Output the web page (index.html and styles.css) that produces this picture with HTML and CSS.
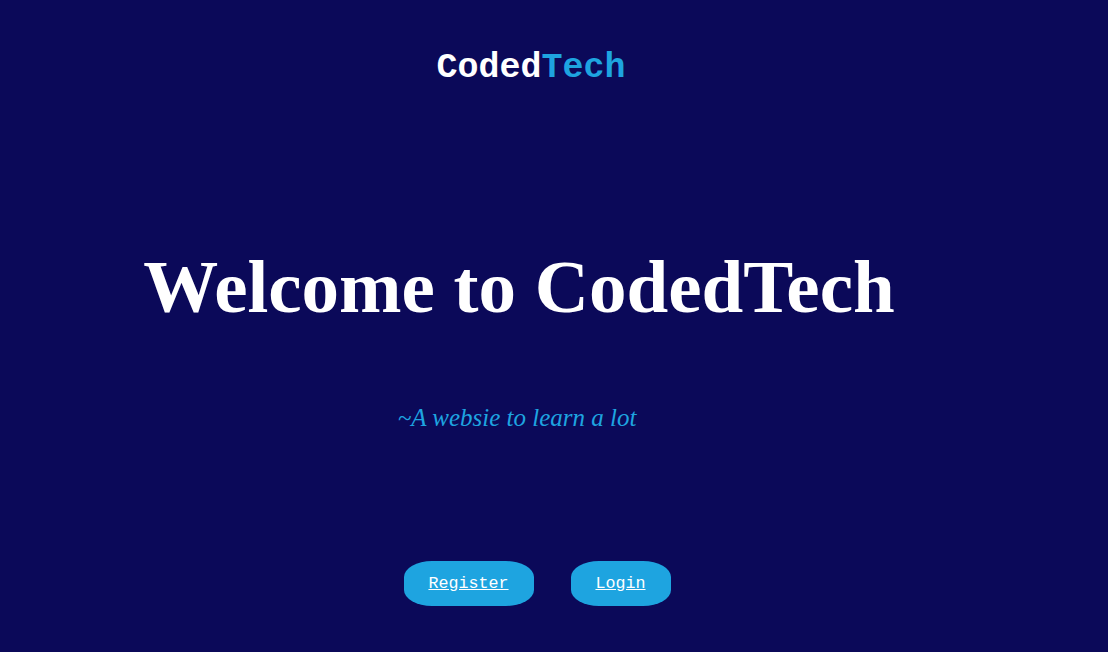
FILE: index.html
```html
<!DOCTYPE html>
<html lang="en">
<head>
<meta charset="utf-8">
<title>CodedTech</title>
<link rel="stylesheet" href="styles.css">
</head>
<body>
<div class="page">
  <header class="logo"><span class="logo-a">Coded</span><span class="logo-b">Tech</span></header>
  <h1 class="title">Welcome to CodedTech</h1>
  <p class="tagline">~A websie to learn a lot</p>
  <nav class="actions">
    <a class="btn btn-register" href="#">Register</a>
    <a class="btn btn-login" href="#">Login</a>
  </nav>
</div>
</body>
</html>
```
FILE: styles.css
```css
html, body {
  margin: 0;
  padding: 0;
  background: #0b0959;
}
.page {
  width: 1108px;
  height: 652px;
  display: flex;
  flex-direction: column;
  align-items: center;
  overflow: hidden;
}
.logo {
  margin-top: 51px;
  padding-right: 46px;
  font-family: "Courier New", "Liberation Mono", monospace;
  font-weight: bold;
  font-size: 35px;
  line-height: 1;
}
.logo-a { color: #ffffff; }
.logo-b { color: #1ea4e0; }
.title {
  margin: 163px 0 0;
  padding-right: 70px;
  font-family: "Liberation Serif", "Times New Roman", serif;
  font-weight: bold;
  font-size: 75px;
  line-height: 1;
  color: #ffffff;
}
.tagline {
  margin: 81px 0 0;
  padding-right: 74px;
  font-family: "Liberation Serif", "Times New Roman", serif;
  font-style: italic;
  font-size: 25px;
  line-height: 1;
  color: #1ea4e0;
}
.actions {
  margin-top: 131px;
  padding-right: 34px;
  display: flex;
  gap: 37px;
}
.btn {
  height: 45px;
  display: flex;
  align-items: center;
  justify-content: center;
  background: #1ea4e0;
  border-radius: 28px / 16px;
  color: #ffffff;
  text-decoration: underline;
  font-family: "Courier New", "Liberation Mono", monospace;
  font-size: 16.7px;
}
.btn-register { width: 130px; }
.btn-login { width: 100px; }
```
